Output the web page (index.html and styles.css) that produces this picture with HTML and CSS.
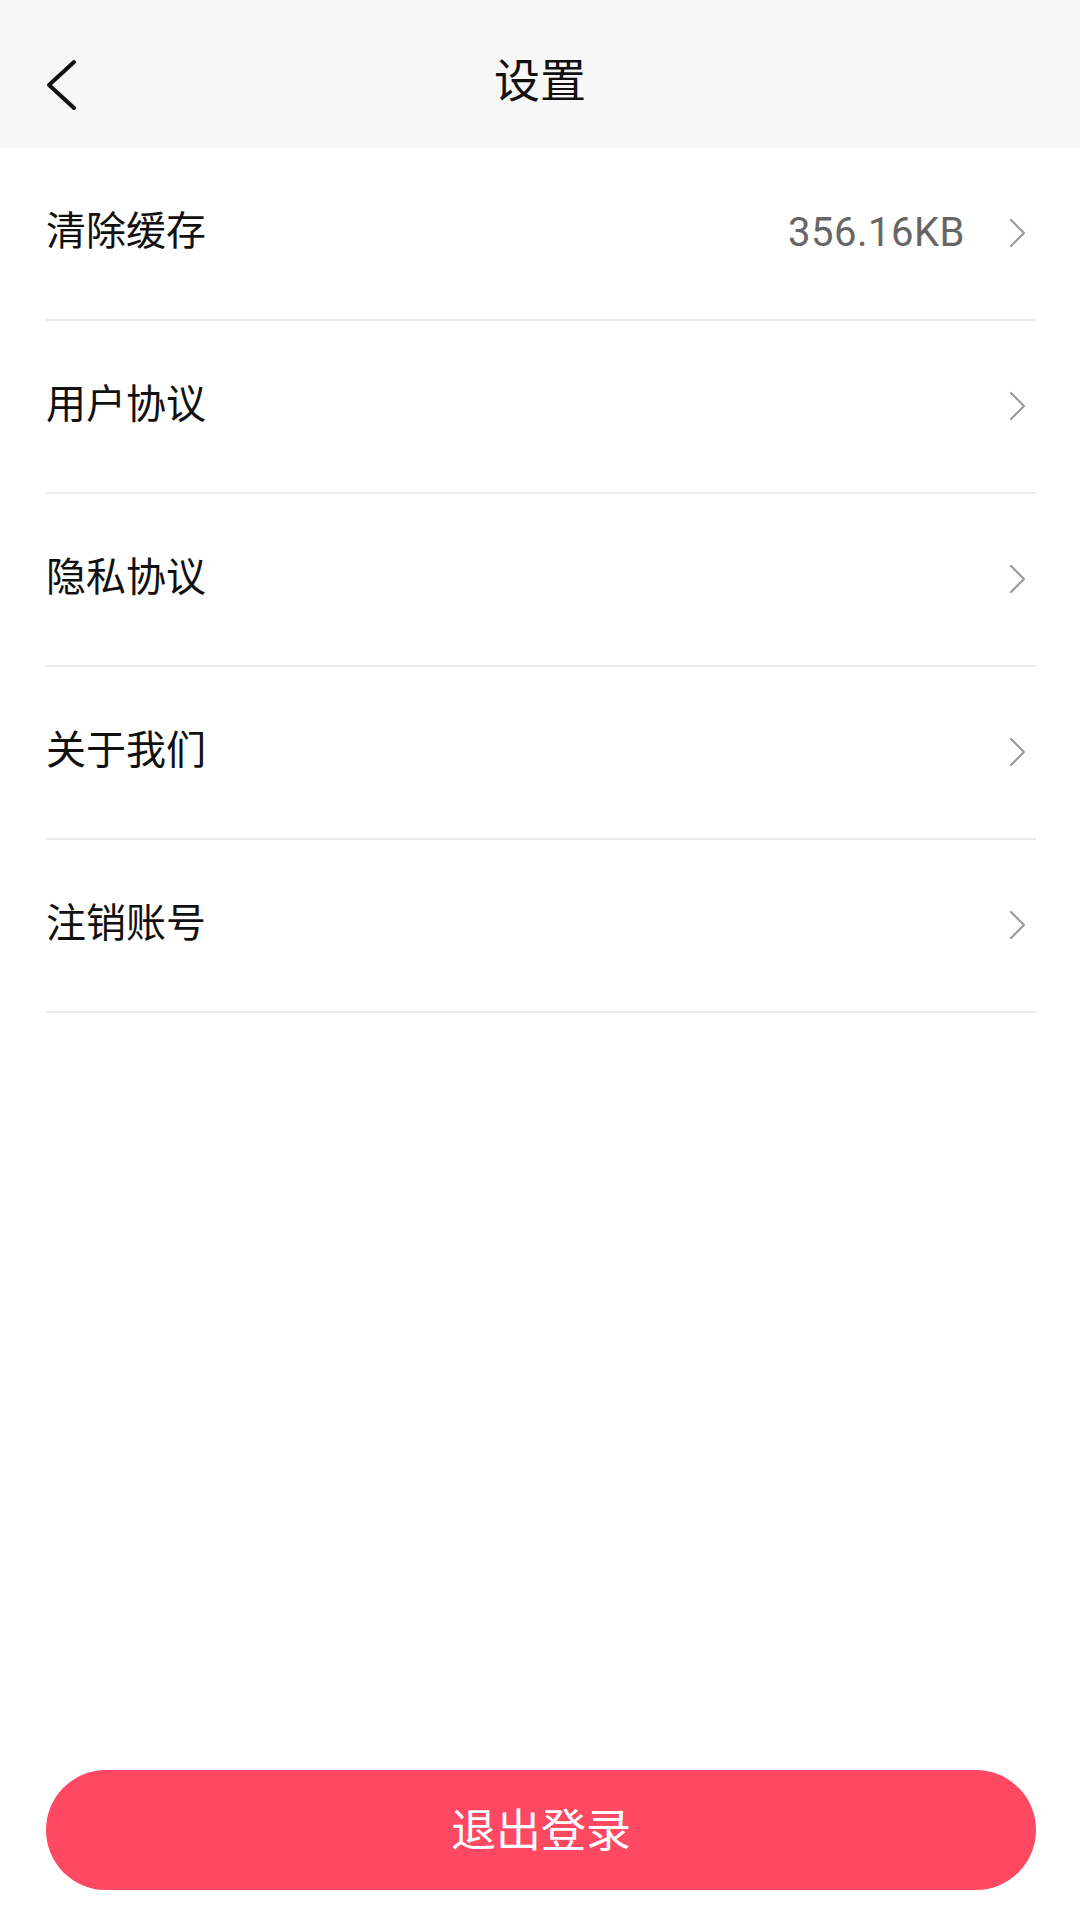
FILE: index.html
```html
<!DOCTYPE html>
<html lang="zh-CN">
<head>
<meta charset="utf-8">
<title>设置</title>
<link rel="stylesheet" href="styles.css">
</head>
<body>
<div class="page">
  <header class="topbar">
    <span class="back">
      <svg width="32" height="52" viewBox="0 0 32 52"><path d="M29 3 L4 26 L29 49" fill="none" stroke="#111" stroke-width="4" stroke-linecap="round" stroke-linejoin="round"/></svg>
    </span>
    <h1 class="title">设置</h1>
  </header>
  <ul class="list">
    <li class="row"><span class="label">清除缓存</span><span class="right"><span class="value">356.16KB</span><svg class="chev" width="18" height="30" viewBox="0 0 18 30"><path d="M2 2 L15 15 L2 28" fill="none" stroke="#9a9a9a" stroke-width="2.2" stroke-linecap="round" stroke-linejoin="round"/></svg></span></li>
    <li class="row"><span class="label">用户协议</span><span class="right"><svg class="chev" width="18" height="30" viewBox="0 0 18 30"><path d="M2 2 L15 15 L2 28" fill="none" stroke="#9a9a9a" stroke-width="2.2" stroke-linecap="round" stroke-linejoin="round"/></svg></span></li>
    <li class="row"><span class="label">隐私协议</span><span class="right"><svg class="chev" width="18" height="30" viewBox="0 0 18 30"><path d="M2 2 L15 15 L2 28" fill="none" stroke="#9a9a9a" stroke-width="2.2" stroke-linecap="round" stroke-linejoin="round"/></svg></span></li>
    <li class="row"><span class="label">关于我们</span><span class="right"><svg class="chev" width="18" height="30" viewBox="0 0 18 30"><path d="M2 2 L15 15 L2 28" fill="none" stroke="#9a9a9a" stroke-width="2.2" stroke-linecap="round" stroke-linejoin="round"/></svg></span></li>
    <li class="row"><span class="label">注销账号</span><span class="right"><svg class="chev" width="18" height="30" viewBox="0 0 18 30"><path d="M2 2 L15 15 L2 28" fill="none" stroke="#9a9a9a" stroke-width="2.2" stroke-linecap="round" stroke-linejoin="round"/></svg></span></li>
  </ul>
  <div class="spacer"></div>
  <div class="footer">
    <button class="logout">退出登录</button>
  </div>
</div>
</body>
</html>
```

FILE: styles.css
```css
* { box-sizing: border-box; }
html, body { margin: 0; padding: 0; background: #fff; }
body {
  font-family: "Noto Sans CJK SC", "Noto Sans", sans-serif;
  color: #111;
}
.page {
  width: 1080px;
  height: 1920px;
  display: flex;
  flex-direction: column;
}
.topbar {
  height: 148px;
  background: #f7f7f7;
  position: relative;
  display: flex;
  align-items: center;
  justify-content: center;
}
.back {
  position: absolute;
  left: 45px;
  top: 59px;
  display: flex;
}
.title {
  margin: 0;
  font-size: 46px;
  font-weight: 400;
  line-height: 1;
  color: #111;
  margin-top: 6px;
}
.list {
  list-style: none;
  margin: 0 44px 0 46px;
  padding: 0;
}
.row {
  height: 173px;
  border-bottom: 2px solid #ebebeb;
  display: flex;
  align-items: center;
  justify-content: space-between;
  padding-bottom: 12px;
}
.label {
  font-size: 40px;
  line-height: 1;
  color: #111;
}
.right {
  display: flex;
  align-items: center;
  padding-top: 10px;
}
.value {
  font-family: "Roboto", "Noto Sans", sans-serif;
  font-size: 40px;
  color: #666;
  letter-spacing: 0.5px;
  margin-right: 44px;
  line-height: 1;
}
.chev {
  display: block;
  margin-right: 9px;
}
.spacer { flex: 1; }
.footer {
  padding: 0 44px 30px 46px;
}
.logout {
  width: 100%;
  height: 120px;
  border: none;
  border-radius: 60px;
  background: #ff4862;
  color: #fff;
  font-family: "Noto Sans CJK SC", sans-serif;
  font-size: 45px;
  line-height: 1;
  padding: 0 0 6px 0;
}
```
